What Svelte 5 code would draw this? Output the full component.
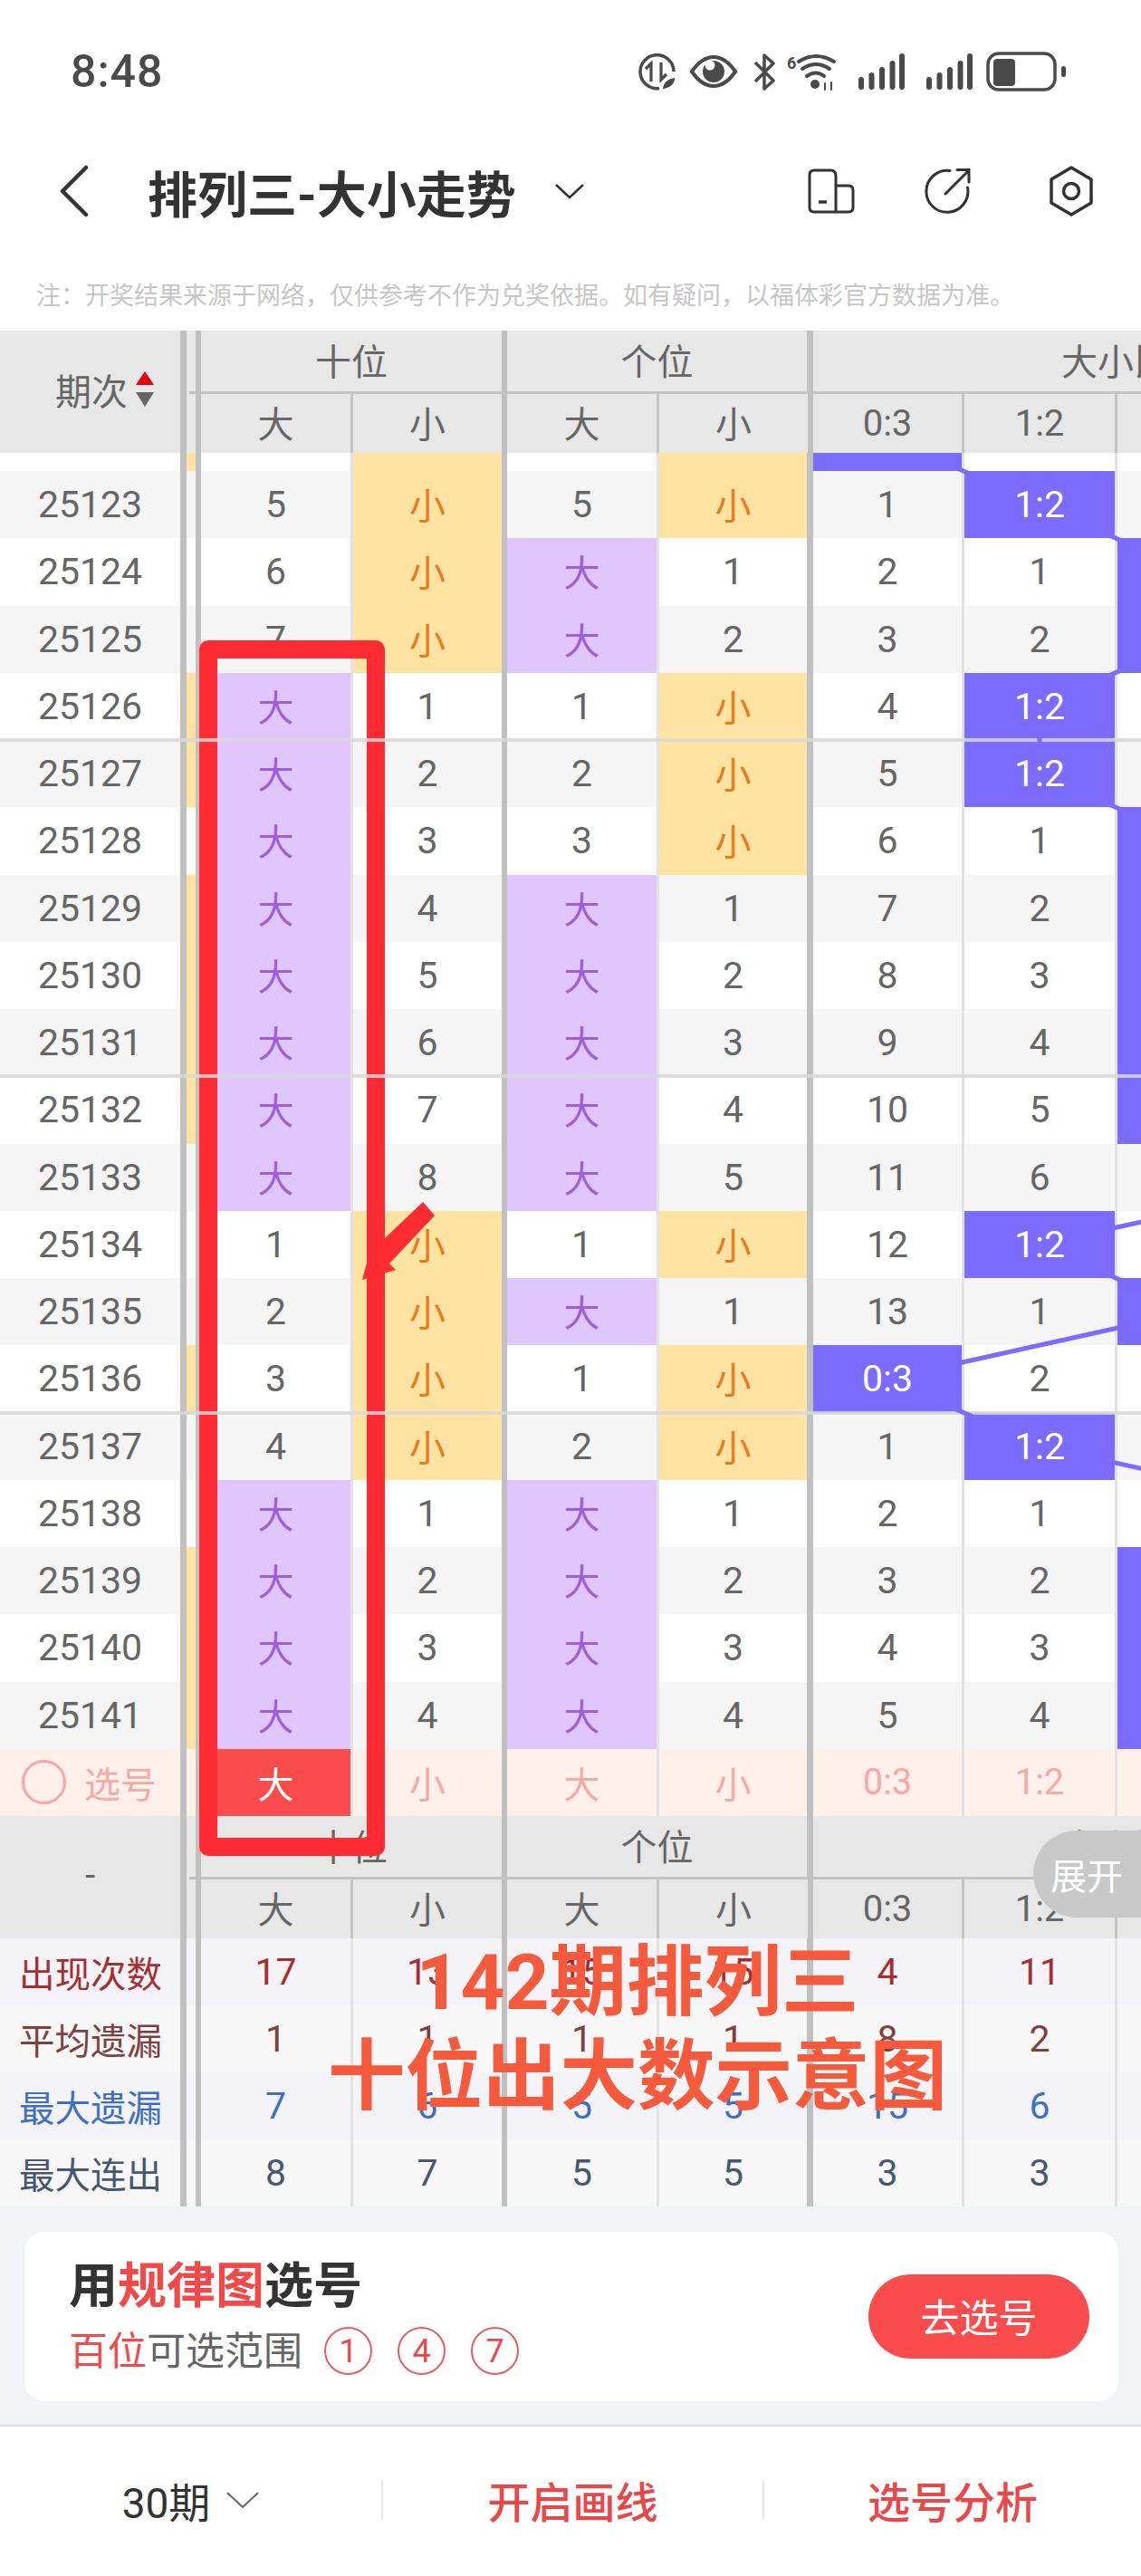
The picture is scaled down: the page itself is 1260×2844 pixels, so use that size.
<script>
	// tens / ones: s5 = number in the big column + 小, b1 = 大 + number in the small column
	const tens = 's5 s6 s7 b1 b2 b3 b4 b5 b6 b7 b8 s1 s2 s3 s4 b1 b2 b3 b4'.split(' ')
	const ones = 's5 b1 b2 s1 s2 s3 b1 b2 b3 b4 b5 s1 b1 s1 s2 b1 b2 b3 b4'.split(' ')
	// which ratio column holds the ball in each row
	const balls = [1, 2, 2, 1, 1, 2, 2, 2, 2, 2, 3, 1, 2, 0, 1, 3, 2, 2, 2]
	const stripHit = [3, 4, 6, 7, 8, 9, 13, 16, 17, 18]

	const rowH = 74.25
	const ballX = [980, 1148, 1316, 1485]

	const miss = [0, 0, 0, 0]
	const rows = balls.map((ball, i) => {
		const counts = miss.map((m, c) => (c === ball ? 0 : m + 1))
		counts.forEach((v, c) => (miss[c] = v))
		return {
			id: 25123 + i,
			ten: tens[i],
			one: ones[i],
			ball,
			counts,
			strip: stripHit.includes(i),
			sep: i === 4 || i === 9 || i === 14
		}
	})

	const trend = [`${ballX[0]},-17`]
		.concat(balls.map((b, i) => `${ballX[b]},${(57 + rowH * i).toFixed(1)}`))
		.join(' ')

	const stats = [
		{ name: '出现次数', cls: 'st-red', vals: [17, 13, 15, 15, 4, 11, '', ''] },
		{ name: '平均遗漏', cls: 'st-brown', vals: [1, 1, 1, 1, 8, 2, '', ''] },
		{ name: '最大遗漏', cls: 'st-blue', vals: [7, 6, 5, 5, 15, 6, '', ''] },
		{ name: '最大连出', cls: 'st-slate', vals: [8, 7, 5, 5, 3, 3, '', ''] }
	]
</script>

{#snippet digit(code)}
	{#if code[0] === 'b'}
		<div class="cell thin big">大</div>
		<div class="cell thick">{code.slice(1)}</div>
	{:else}
		<div class="cell thin">{code.slice(1)}</div>
		<div class="cell thick small">小</div>
	{/if}
{/snippet}

{#snippet ratioCell(row, c, cls)}
	{#if row.ball === c}
		<div class="cell {cls} ball"><span>{c === 0 ? '0:3' : c === 1 ? '1:2' : ''}</span></div>
	{:else}
		<div class="cell {cls}">{c < 2 ? row.counts[c] : ''}</div>
	{/if}
{/snippet}

{#snippet tableHead(left)}
	<div class="head">
		<div class="h-left">{@render left()}</div>
		<div class="h-gut"></div>
		<div class="h-group g-a">十位</div>
		<div class="h-group g-b">个位</div>
		<div class="h-group g-c"><span>大小比</span></div>
		<div class="h-sub thin zh">大</div>
		<div class="h-sub thick zh">小</div>
		<div class="h-sub thin zh">大</div>
		<div class="h-sub thick zh">小</div>
		<div class="h-sub thin">0:3</div>
		<div class="h-sub thin">1:2</div>
		<div class="h-sub"></div>
	</div>
{/snippet}

{#snippet sortLabel()}
	<span>期次</span>
	<svg class="sort" width="20" height="40" viewBox="0 0 20 40">
		<path d="M10 0 L20 15 H0 Z" fill="#e8000b" />
		<path d="M0 23 H20 L10 39 Z" fill="#666" />
	</svg>
{/snippet}

{#snippet dashLabel()}
	<span class="dash">-</span>
{/snippet}

<div class="page">
	<div class="status">
		<span class="time">8:48</span>
		<div class="status-icons">
			<svg width="43" height="41" viewBox="0 0 43 41" fill="none" stroke="#4a4a4a" stroke-width="3.5">
				<path d="M24 38.5 A18.5 18.5 0 1 1 40 20" />
				<path d="M15 31 V11 L9 17 M26 10 V29 L32 23" stroke-width="3.2" />
				<path d="M27 40 Q28 28 42 26 Q42 38 27 40 Z" fill="#4a4a4a" stroke="#fff" stroke-width="1.5" />
			</svg>
			<svg width="54" height="38" viewBox="0 0 54 38" fill="none" stroke="#4a4a4a" stroke-width="4">
				<path d="M3 19 Q14 3 27 3 Q40 3 51 19 Q40 35 27 35 Q14 35 3 19 Z" stroke-linejoin="round" />
				<circle cx="27" cy="19" r="12" fill="#4a4a4a" stroke="none" />
				<circle cx="23" cy="12" r="5.5" fill="#fff" stroke="none" />
			</svg>
			<svg class="bt" width="26" height="41" viewBox="0 0 26 41" fill="none" stroke="#4a4a4a" stroke-width="3.5" stroke-linejoin="round">
				<path d="M3 10 L23 30 L13 39 V2 L23 11 L3 31" />
			</svg>
			<svg class="wifi" width="56" height="41" viewBox="0 0 56 41" fill="none" stroke="#4a4a4a" stroke-width="4" stroke-linecap="round">
				<path d="M13 9 Q32 -3 52 9 M17 17 Q32 7 47 17 M22 25 Q32 18 41 25" />
				<circle cx="31" cy="34" r="5" fill="#4a4a4a" stroke="none" />
				<path d="M42 33 V40 M49 32 V40" stroke-width="2" />
				<text x="0" y="17" class="wifi-six">6</text>
			</svg>
			<svg class="sig" width="52" height="41" viewBox="0 0 52 41" stroke="#4a4a4a" stroke-width="6" stroke-linecap="round">
				<path d="M3 37 V29 M14.500 37 V24 M26 37 V18 M37.500 37 V11 M48 37 V3" />
			</svg>
			<svg class="sig" width="52" height="41" viewBox="0 0 52 41" stroke="#4a4a4a" stroke-width="6" stroke-linecap="round">
				<path d="M3 37 V29 M14.500 37 V24 M26 37 V18 M37.500 37 V11 M48 37 V3" />
			</svg>
			<svg width="89" height="44" viewBox="0 0 89 44" fill="none">
				<rect x="2" y="2" width="74" height="40" rx="12" stroke="#4a4a4a" stroke-width="3.5" />
				<rect x="8" y="8" width="24" height="30" rx="4" fill="#4a4a4a" />
				<rect x="83" y="16" width="5" height="12" rx="2.500" fill="#4a4a4a" />
			</svg>
		</div>
	</div>

	<div class="nav">
		<svg class="back" width="34" height="58" viewBox="0 0 34 58" fill="none" stroke="#333" stroke-width="4.500" stroke-linecap="round" stroke-linejoin="round">
			<path d="M30 3 L4 29 L30 55" />
		</svg>
		<span class="title">排列三-大小走势</span>
		<svg class="caret" width="32" height="17" viewBox="0 0 32 17" fill="none" stroke="#333" stroke-width="2.500">
			<path d="M1 1 L16 15 L31 1" />
		</svg>
		<div class="nav-icons">
			<svg width="52" height="50" viewBox="0 0 52 50" fill="none" stroke="#333" stroke-width="3" stroke-linejoin="round">
				<path d="M7 2 H25 Q31 2 31 8 V48 H7 Q2 48 2 43 V7 Q2 2 7 2 Z" />
				<path d="M31 19 H45 Q50 19 50 24 V43 Q50 48 45 48 H31" />
				<path d="M12 37 H21" stroke-width="3.500" />
			</svg>
			<svg width="52" height="52" viewBox="0 0 52 52" fill="none" stroke="#333" stroke-width="3" stroke-linecap="round">
				<path d="M29 3.500 A23 23 0 1 0 48.500 22" />
				<path d="M24 29 L50 3 M37 2.500 H50 V16" />
			</svg>
			<svg class="hex" width="50" height="56" viewBox="0 0 50 56" fill="none" stroke="#333" stroke-width="3.500" stroke-linejoin="round">
				<path d="M25 2 L47 15 V41 L25 54 L3 41 V15 Z" />
				<circle cx="25" cy="28" r="8.500" />
			</svg>
		</div>
	</div>

	<div class="note">注：开奖结果来源于网络，仅供参考不作为兑奖依据。如有疑问，以福体彩官方数据为准。</div>

	<div class="table">
		{@render tableHead(sortLabel)}

		<div class="body">
			<div class="row partial">
				<div class="cell"></div>
				<div class="gut hit"></div>
				<div class="cell thin"></div>
				<div class="cell thick small"></div>
				<div class="cell thin"></div>
				<div class="cell thick small"></div>
				<div class="cell thin ball"></div>
				<div class="cell thin"></div>
				<div class="cell"></div>
			</div>

			{#each rows as row, i}
				<div class="row" class:grey={i % 2 === 0} class:sep={row.sep}>
					<div class="cell">{row.id}</div>
					<div class="gut" class:hit={row.strip}></div>
					{@render digit(row.ten)}
					{@render digit(row.one)}
					{@render ratioCell(row, 0, 'thin')}
					{@render ratioCell(row, 1, 'thin')}
					{@render ratioCell(row, 2, '')}
				</div>
			{/each}

			<svg class="trend" width="1260" height="1430" viewBox="0 0 1260 1430" fill="none" stroke="#7b6bff" stroke-width="5">
				<polyline points={trend} />
			</svg>

			<div class="row pick">
				<div class="cell pick-left"><i class="ring"></i><span>选号</span></div>
				<div class="gut"></div>
				<div class="cell thin on">大</div>
				<div class="cell thick">小</div>
				<div class="cell thin">大</div>
				<div class="cell thick">小</div>
				<div class="cell thin">0:3</div>
				<div class="cell thin">1:2</div>
				<div class="cell"></div>
			</div>
		</div>

		<div class="foot-head">
			{@render tableHead(dashLabel)}
			<div class="expand">展开</div>
		</div>

		{#each stats as s, i}
			<div class="row stat {s.cls}" class:tint={i % 2 === 0}>
				<div class="cell">{s.name}</div>
				<div class="gut"></div>
				<div class="cell thin">{s.vals[0]}</div>
				<div class="cell thick">{s.vals[1]}</div>
				<div class="cell thin">{s.vals[2]}</div>
				<div class="cell thick">{s.vals[3]}</div>
				<div class="cell thin">{s.vals[4]}</div>
				<div class="cell thin">{s.vals[5]}</div>
				<div class="cell"></div>
			</div>
		{/each}
	</div>

	<div class="promo">
		<div class="card">
			<div>
				<div class="card-title">用<em>规律图</em>选号</div>
				<div class="card-sub">
					<em>百位</em>可选范围
					<span class="balls">
						<b>1</b>
						<b>4</b>
						<b>7</b>
					</span>
				</div>
			</div>
			<div class="go">去选号</div>
		</div>
	</div>

	<div class="tabs">
		<div class="tab period">
			<span>30期</span>
			<svg width="36" height="18" viewBox="0 0 36 18" fill="none" stroke="#666" stroke-width="2">
				<path d="M1 1 L18 17 L35 1" />
			</svg>
		</div>
		<div class="tab link">开启画线</div>
		<div class="tab link">选号分析</div>
	</div>

	<!-- hand drawn annotation on top of the screenshot -->
	<div class="mark-box"></div>
	<svg class="mark-arrow" width="90" height="96" viewBox="395 1322 90 96">
		<polygon points="467,1327 480,1342 430,1395 437,1402 400,1413 410,1375 420,1372" fill="#fe2c32" />
	</svg>
	<div class="mark-text">142期排列三<br />十位出大数示意图</div>
</div>

<style>
	:global(body) {
		margin: 0;
		background: #fff;
	}

	.page {
		position: relative;
		width: 1260px;
		height: 2844px;
		overflow: hidden;
		background: #fff;
		font-family: Roboto, "Noto Sans CJK SC", sans-serif;
		color: #666;
		display: flex;
		flex-direction: column;
	}

	/* status bar */
	.status {
		height: 158px;
		flex: none;
		display: flex;
		align-items: center;
		justify-content: space-between;
		padding: 0 82px 0 78px;
	}

	.time {
		font-size: 50px;
		color: #4a4a4a;
		font-weight: 500;
		letter-spacing: 1px;
	}

	.status-icons {
		display: flex;
		align-items: center;
		gap: 14px;
	}

	.bt {
		margin-left: 2px;
	}

	.wifi {
		margin-left: -2px;
		overflow: visible;
	}

	.sig {
		margin-left: 9px;
	}

	.wifi-six {
		font-size: 18px;
		font-weight: 700;
		fill: #4a4a4a;
		stroke: none;
		font-family: Roboto, sans-serif;
	}

	/* title bar */
	.nav {
		height: 106px;
		flex: none;
		display: flex;
		align-items: center;
		padding: 0 52px 0 65px;
	}

	.title {
		margin-left: 64px;
		font-size: 55px;
		font-weight: 700;
		color: #333;
		width: 450px;
		white-space: nowrap;
	}

	.nav-icons {
		margin-left: auto;
		display: flex;
		align-items: center;
		gap: 76px;
	}

	.hex {
		margin-left: 10px;
	}

	.note {
		height: 101px;
		flex: none;
		box-sizing: border-box;
		padding: 45px 0 0 40px;
		font-size: 27px;
		line-height: 36px;
		color: #c6c6c6;
		white-space: nowrap;
	}

	/* table */
	.table {
		height: 2071px;
		flex: none;
		overflow: hidden;
	}

	.head {
		display: grid;
		grid-template-columns: 199px 23px 168px 170px 168px 170px 167px 169px 26px;
		grid-template-rows: 70px 65px;
		background: #e7e7e7;
		font-size: 40px;
	}

	.h-left {
		grid-row: 1 / span 2;
		display: flex;
		align-items: center;
		justify-content: center;
		gap: 9px;
		padding: 0 0 5px 32px;
	}

	.dash {
		margin-left: -32px;
	}

	.sort {
		display: block;
	}

	.h-gut {
		grid-row: 1 / span 2;
		position: relative;
		box-sizing: border-box;
		border-left: 7px solid #c0c0c0;
		border-right: 6px solid #c0c0c0;
	}

	.h-gut::after {
		content: "";
		position: absolute;
		left: 3px;
		right: 0;
		top: 67px;
		height: 3px;
		background: #c0c0c0;
	}

	.h-group {
		box-sizing: border-box;
		border-bottom: 3px solid #c4c4c4;
		padding-bottom: 4px;
		display: flex;
		align-items: center;
		justify-content: center;
		white-space: nowrap;
	}

	.g-a,
	.g-b {
		grid-column: span 2;
		border-right: 6px solid #c0c0c0;
	}

	.g-b {
		border-right-width: 7px;
	}

	.g-c {
		grid-column: span 3;
		justify-content: flex-start;
		padding-left: 274px;
		overflow: hidden;
	}

	.g-c span {
		flex: none;
	}

	.h-sub {
		box-sizing: border-box;
		display: flex;
		align-items: center;
		justify-content: center;
	}

	.h-sub.zh {
		padding-bottom: 4px;
	}

	.h-sub.thin {
		border-right: 3px solid #c4c4c4;
	}

	.h-sub.thick {
		border-right: 6px solid #c0c0c0;
	}

	.body {
		position: relative;
	}

	.row {
		position: relative;
		display: grid;
		grid-template-columns: 199px 23px 168px 170px 168px 170px 167px 169px 26px;
		height: 74.25px;
		background: #fff;
		font-size: 41px;
	}

	.row.grey {
		background: #f5f5f5;
	}

	.row.partial {
		height: 20px;
	}

	.row.sep::before {
		content: "";
		position: absolute;
		left: 0;
		right: 0;
		top: -2px;
		height: 4px;
		background: rgba(215, 215, 215, 0.85);
		z-index: 1;
	}

	.cell {
		box-sizing: border-box;
		display: flex;
		align-items: center;
		justify-content: center;
		min-width: 0;
		overflow: hidden;
	}

	.cell.thin {
		border-right: 3px solid #e2e2e2;
	}

	.cell.thick {
		border-right: 6px solid #c0c0c0;
	}

	.row > .cell:nth-child(6) {
		border-right-width: 7px;
	}

	.row > .cell:nth-child(8) {
		border-right-color: #e2e2e2;
		border-right-width: 3px;
	}

	.gut {
		box-sizing: border-box;
		border-left: 7px solid #c0c0c0;
		border-right: 6px solid #c0c0c0;
	}

	.gut.hit {
		background: #fee3a3;
	}

	.big {
		background: #e1c6fd;
		color: #9c5fd8;
		font-size: 40px;
		padding-bottom: 2px;
	}

	.small {
		background: #fee3a3;
		color: #ec7a1c;
		font-size: 40px;
		padding-bottom: 2px;
	}

	.ball {
		background: #7b6bff;
		color: #fff;
	}

	.ball span {
		position: relative;
		z-index: 3;
	}

	.trend {
		position: absolute;
		left: 0;
		top: 0;
		z-index: 2;
		pointer-events: none;
	}

	/* pick row */
	.row.pick {
		height: 74.25px;
		background: #fff0ea;
		color: #f9a8a8;
		font-size: 40px;
	}

	.pick-left {
		gap: 20px;
		padding-right: 2px;
	}

	.ring {
		width: 49px;
		height: 49px;
		box-sizing: border-box;
		border: 3px solid #f9a5a5;
		border-radius: 50%;
	}

	.cell.on {
		background: #fb4c4d;
		color: #fff;
	}

	.foot-head {
		position: relative;
	}

	.expand {
		position: absolute;
		right: 0;
		top: 16px;
		width: 119px;
		height: 96px;
		box-sizing: border-box;
		padding-left: 19px;
		border-radius: 48px 0 0 48px;
		background: #c8c8c8;
		color: #fff;
		font-size: 40px;
		display: flex;
		align-items: center;
	}

	.row.stat {
		height: 74px;
		background: #f7f7f7;
		font-size: 41px;
	}

	.row.stat.tint {
		background: #f3f3f8;
	}

	.row.stat > .cell:first-child {
		font-size: 39.5px;
		padding: 0 0 2px 1px;
	}

	.st-red {
		color: #a52f30;
	}

	.st-brown {
		color: #7f4040;
	}

	.st-blue {
		color: #3f6fc5;
	}

	.st-slate {
		color: #4a5570;
	}

	/* promo card */
	.promo {
		height: 243px;
		flex: none;
		box-sizing: border-box;
		padding: 28px 25px 0 27px;
		background: #f2f3f6;
		border-bottom: 2px solid #ddd;
	}

	.card {
		height: 187px;
		box-sizing: border-box;
		padding: 0 32px 0 49px;
		background: #fff;
		border-radius: 22px;
		display: flex;
		align-items: center;
		justify-content: space-between;
	}

	.card em {
		font-style: normal;
		color: #f04a4b;
	}

	.card-title {
		font-size: 54px;
		line-height: 66px;
		font-weight: 700;
		color: #333;
		white-space: nowrap;
		margin-top: 0;
	}

	.card-sub {
		display: flex;
		align-items: center;
		font-size: 43px;
		line-height: 56px;
		margin-top: 10px;
		color: #666;
		white-space: nowrap;
	}

	.balls {
		display: flex;
		gap: 28px;
		margin-left: 24px;
	}

	.balls b {
		width: 53px;
		height: 53px;
		box-sizing: border-box;
		border: 2px solid #e06060;
		border-radius: 50%;
		color: #e8484a;
		font-size: 36px;
		font-weight: 400;
		display: flex;
		align-items: center;
		justify-content: center;
	}

	.go {
		width: 244px;
		height: 93px;
		padding-bottom: 3px;
		box-sizing: border-box;
		border-radius: 47px;
		background: #fb4c4d;
		color: #fff;
		font-size: 43px;
		display: flex;
		align-items: center;
		justify-content: center;
	}

	/* bottom tabs */
	.tabs {
		flex: 1;
		display: grid;
		grid-template-columns: 421px 421px 418px;
		align-items: center;
		padding-bottom: 4px;
	}

	.tab {
		height: 42px;
		display: flex;
		align-items: center;
		justify-content: center;
		font-size: 47px;
		white-space: nowrap;
	}

	.tab + .tab {
		border-left: 2px solid #e6e6e6;
	}

	.period {
		gap: 18px;
		color: #333;
		font-size: 46px;
	}

	.link {
		color: #e8484a;
		font-weight: 500;
	}

	/* annotation */
	.mark-box {
		position: absolute;
		left: 220px;
		top: 707px;
		width: 205px;
		height: 1342px;
		box-sizing: border-box;
		border: 20px solid #fe2c32;
		border-radius: 10px;
	}

	.mark-arrow {
		position: absolute;
		left: 395px;
		top: 1322px;
	}

	.mark-text {
		position: absolute;
		left: 304px;
		top: 2137px;
		width: 800px;
		text-align: center;
		font-size: 85.5px;
		line-height: 104px;
		font-weight: 700;
		color: #f55a3c;
	}
</style>
